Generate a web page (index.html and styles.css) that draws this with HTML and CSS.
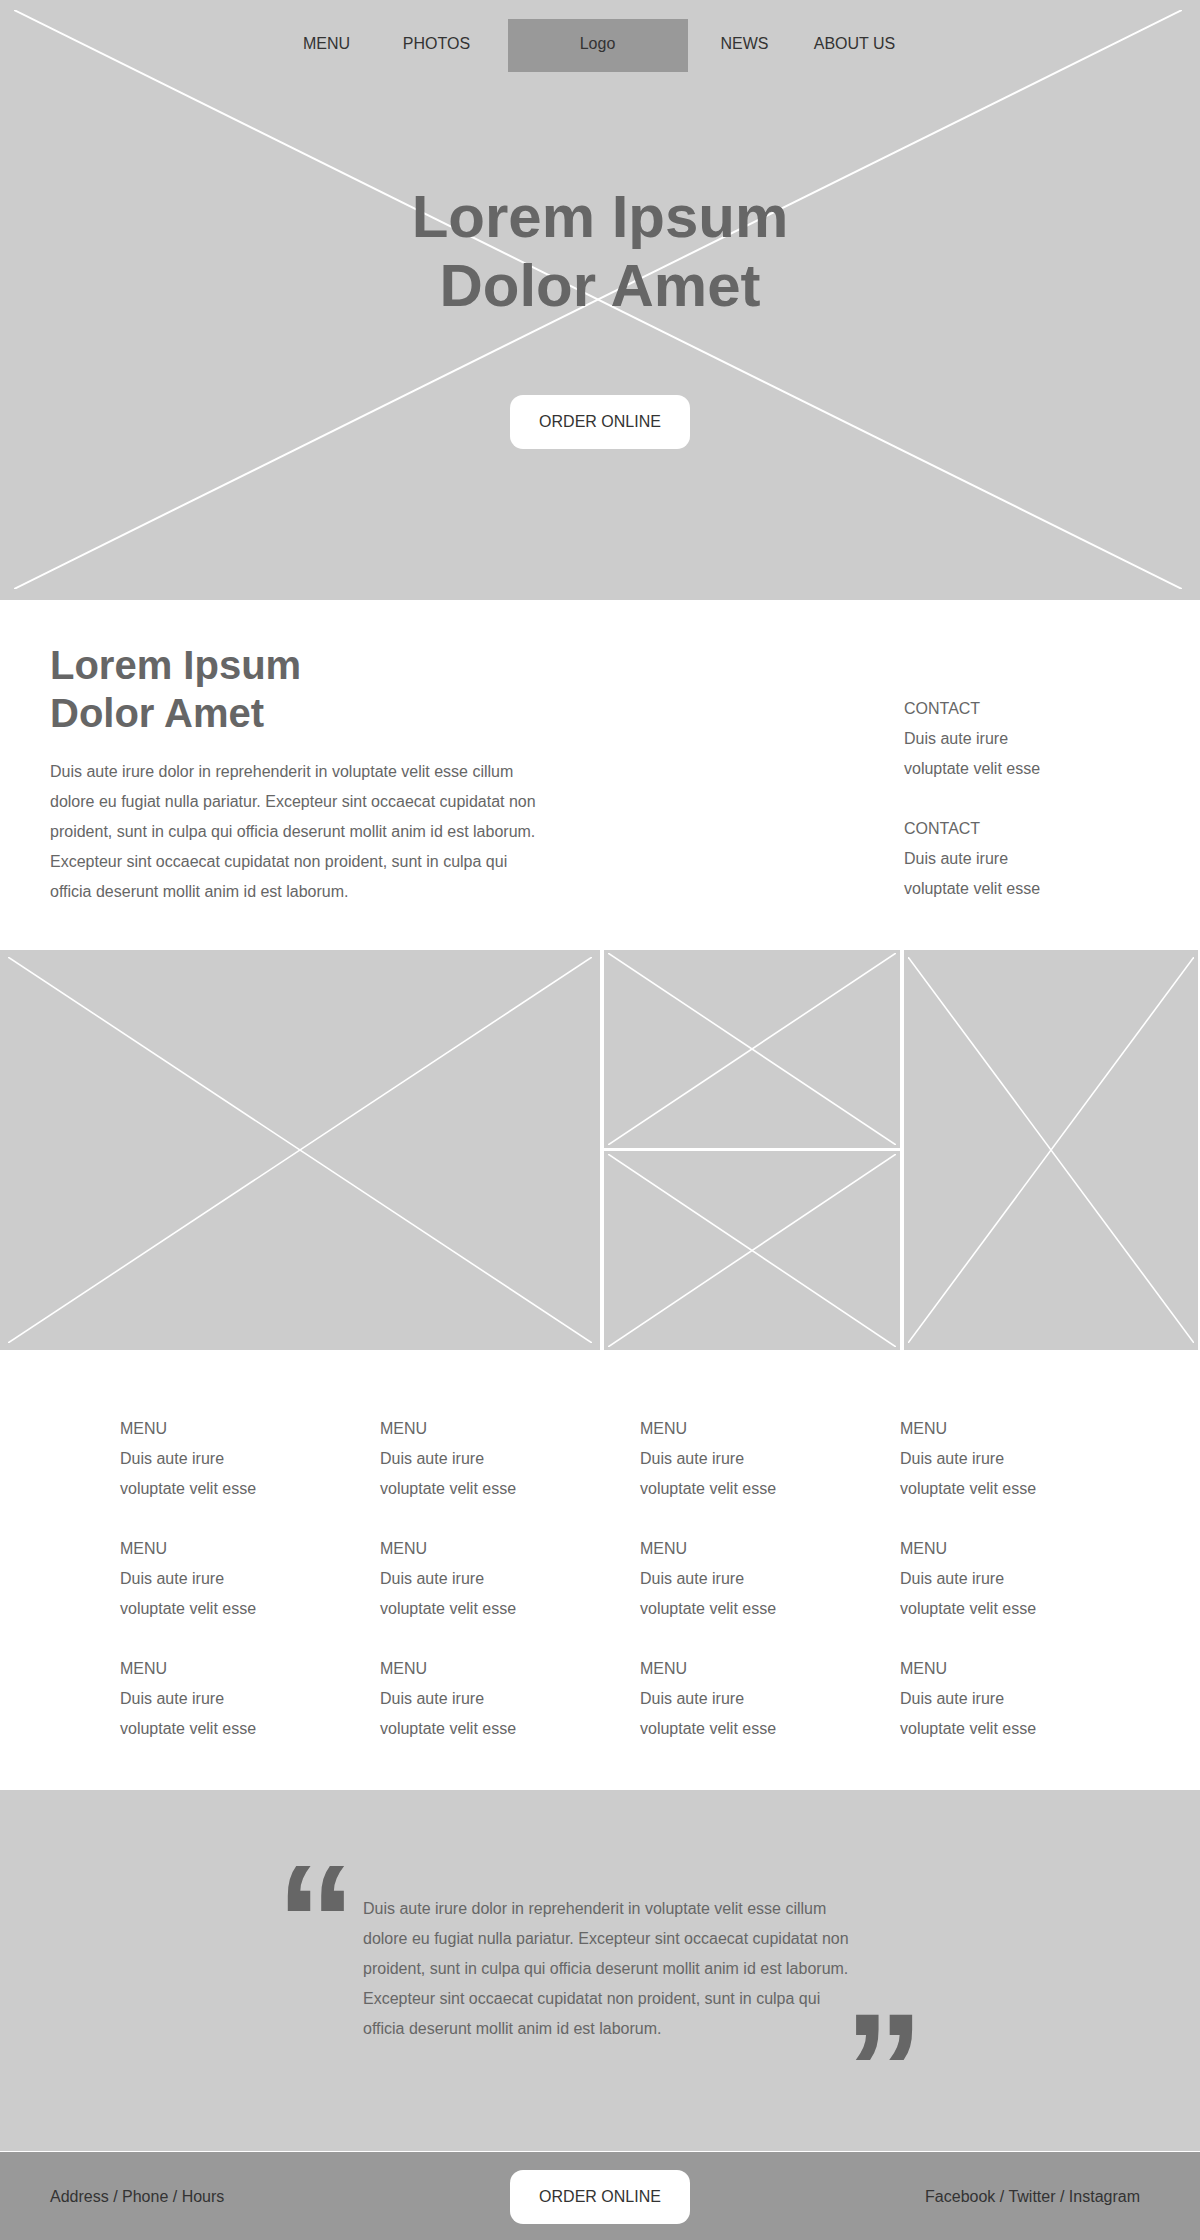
FILE: index.html
```html
<!DOCTYPE html>
<html lang="en">
<head>
<meta charset="utf-8">
<title>Lorem Ipsum</title>
<link rel="stylesheet" href="styles.css">
</head>
<body>
<header class="hero">
  <svg class="hero-x" viewBox="0 0 100 100" preserveAspectRatio="none" aria-hidden="true">
    <line x1="0" y1="0" x2="100" y2="100"/>
    <line x1="100" y1="0" x2="0" y2="100"/>
  </svg>
  <nav class="nav">
    <a class="nav-item">MENU</a>
    <a class="nav-item">PHOTOS</a>
    <div class="logo">Logo</div>
    <a class="nav-item">NEWS</a>
    <a class="nav-item">ABOUT US</a>
  </nav>
  <h1 class="hero-title">Lorem Ipsum<br>Dolor Amet</h1>
  <a class="btn">ORDER ONLINE</a>
</header>

<section class="about">
  <div class="about-main">
    <h2 class="about-title">Lorem Ipsum<br>Dolor Amet</h2>
    <p class="body-text">Duis aute irure dolor in reprehenderit in voluptate velit esse cillum dolore eu fugiat nulla pariatur. Excepteur sint occaecat cupidatat non proident, sunt in culpa qui officia deserunt mollit anim id est laborum. Excepteur sint occaecat cupidatat non proident, sunt in culpa qui officia deserunt mollit anim id est laborum.</p>
  </div>
  <div class="contact">
    <div class="info-block">
      <div>CONTACT</div>
      <div>Duis aute irure</div>
      <div>voluptate velit esse</div>
    </div>
    <div class="info-block">
      <div>CONTACT</div>
      <div>Duis aute irure</div>
      <div>voluptate velit esse</div>
    </div>
  </div>
</section>

<section class="gallery">
  <div class="ph ph-big"><svg viewBox="0 0 100 100" preserveAspectRatio="none"><line x1="0" y1="0" x2="100" y2="100"/><line x1="100" y1="0" x2="0" y2="100"/></svg></div>
  <div class="ph ph-small"><svg viewBox="0 0 100 100" preserveAspectRatio="none"><line x1="0" y1="0" x2="100" y2="100"/><line x1="100" y1="0" x2="0" y2="100"/></svg></div>
  <div class="ph ph-tall"><svg viewBox="0 0 100 100" preserveAspectRatio="none"><line x1="0" y1="0" x2="100" y2="100"/><line x1="100" y1="0" x2="0" y2="100"/></svg></div>
  <div class="ph ph-small"><svg viewBox="0 0 100 100" preserveAspectRatio="none"><line x1="0" y1="0" x2="100" y2="100"/><line x1="100" y1="0" x2="0" y2="100"/></svg></div>
</section>

<section class="menu-list">
  <div class="info-block"><div>MENU</div><div>Duis aute irure</div><div>voluptate velit esse</div></div>
  <div class="info-block"><div>MENU</div><div>Duis aute irure</div><div>voluptate velit esse</div></div>
  <div class="info-block"><div>MENU</div><div>Duis aute irure</div><div>voluptate velit esse</div></div>
  <div class="info-block"><div>MENU</div><div>Duis aute irure</div><div>voluptate velit esse</div></div>
  <div class="info-block"><div>MENU</div><div>Duis aute irure</div><div>voluptate velit esse</div></div>
  <div class="info-block"><div>MENU</div><div>Duis aute irure</div><div>voluptate velit esse</div></div>
  <div class="info-block"><div>MENU</div><div>Duis aute irure</div><div>voluptate velit esse</div></div>
  <div class="info-block"><div>MENU</div><div>Duis aute irure</div><div>voluptate velit esse</div></div>
  <div class="info-block"><div>MENU</div><div>Duis aute irure</div><div>voluptate velit esse</div></div>
  <div class="info-block"><div>MENU</div><div>Duis aute irure</div><div>voluptate velit esse</div></div>
  <div class="info-block"><div>MENU</div><div>Duis aute irure</div><div>voluptate velit esse</div></div>
  <div class="info-block"><div>MENU</div><div>Duis aute irure</div><div>voluptate velit esse</div></div>
</section>

<section class="testimonial">
  <span class="qmark qmark-open">&ldquo;</span>
  <p class="body-text quote-text">Duis aute irure dolor in reprehenderit in voluptate velit esse cillum dolore eu fugiat nulla pariatur. Excepteur sint occaecat cupidatat non proident, sunt in culpa qui officia deserunt mollit anim id est laborum. Excepteur sint occaecat cupidatat non proident, sunt in culpa qui officia deserunt mollit anim id est laborum.</p>
  <span class="qmark qmark-close">&rdquo;</span>
</section>

<footer class="footer">
  <div class="footer-left">Address / Phone / Hours</div>
  <a class="btn">ORDER ONLINE</a>
  <div class="footer-right">Facebook / Twitter / Instagram</div>
</footer>
</body>
</html>
```

FILE: styles.css
```css
* { box-sizing: border-box; }

body {
  margin: 0;
  font-family: "Liberation Sans", Arial, sans-serif;
  font-size: 16px;
  color: #666;
  background: #fff;
}

/* ---------- hero ---------- */
.hero {
  position: relative;
  height: 600px;
  background: #ccc;
  display: flex;
  flex-direction: column;
  align-items: center;
  padding-top: 19px;
}

.hero-x {
  position: absolute;
  left: 14px;
  right: 18px;
  top: 10px;
  bottom: 11px;
  width: calc(100% - 32px);
  height: calc(100% - 21px);
}
.hero-x line,
.ph line {
  stroke: #fff;
  stroke-width: 2;
  vector-effect: non-scaling-stroke;
}

.nav {
  position: relative;
  display: flex;
  align-items: center;
  height: 53px;
  padding-right: 19px;
}
.nav-item {
  width: 110px;
  text-align: center;
  color: #333;
  font-size: 16px;
  padding-bottom: 4px;
}
.logo {
  width: 180px;
  height: 53px;
  margin: 0 2px 0 16px;
  padding-bottom: 4px;
  background: #999;
  color: #333;
  display: flex;
  align-items: center;
  justify-content: center;
}

.hero-title {
  position: relative;
  margin: 110px 0 0;
  font-size: 60px;
  line-height: 69px;
  font-weight: bold;
  color: #666;
  text-align: center;
}

.btn {
  position: relative;
  width: 180px;
  height: 54px;
  border-radius: 13px;
  background: #fff;
  color: #333;
  display: flex;
  align-items: center;
  justify-content: center;
  font-size: 16px;
}
.hero .btn { margin-top: 75px; }

/* ---------- about ---------- */
.about {
  height: 350px;
  display: grid;
  grid-template-columns: 854px 1fr;
  padding: 41px 50px 0;
}
.about-title {
  margin: 0;
  font-size: 40px;
  line-height: 48px;
  font-weight: bold;
  color: #666;
}
.body-text {
  margin: 20px 0 0;
  width: 490px;
  line-height: 30px;
  color: #666;
}
.contact {
  margin-top: 53px;
  display: flex;
  flex-direction: column;
  gap: 30px;
}
.info-block {
  line-height: 30px;
  color: #666;
}

/* ---------- gallery ---------- */
.gallery {
  height: 400px;
  display: grid;
  grid-template-columns: 600px 296px 294px;
  grid-template-rows: 198px 199px;
  column-gap: 4px;
  row-gap: 3px;
}
.ph {
  background: #ccc;
  display: flex;
}
.ph svg {
  display: block;
  width: 100%;
  height: 100%;
}
.ph line { stroke-width: 1.6; }
.ph-big { grid-row: 1 / 3; padding: 7px 8px; }
.ph-tall { grid-row: 1 / 3; grid-column: 3; padding: 7px 4px; }
.ph-small { grid-column: 2; padding: 3px 4px; }

/* ---------- menu list ---------- */
.menu-list {
  height: 440px;
  display: grid;
  grid-template-columns: repeat(4, 260px);
  grid-auto-rows: 90px;
  row-gap: 30px;
  padding: 64px 0 0 120px;
}

/* ---------- testimonial ---------- */
.testimonial {
  height: 361px;
  background: #ccc;
  display: flex;
  align-items: flex-start;
  padding-left: 276px;
}
.qmark {
  display: block;
  font-size: 160px;
  line-height: 160px;
  font-weight: bold;
  color: #666;
}
.qmark-open {
  width: 87px;
  margin-top: 51px;
}
.quote-text {
  margin: 104px 0 0;
}
.qmark-close {
  margin: 200px 0 0 -9px;
}

/* ---------- footer ---------- */
.footer {
  height: 89px;
  background: #999;
  border-top: 1px solid #fff;
  display: grid;
  grid-template-columns: 1fr 180px 1fr;
  align-items: center;
  padding: 2px 50px 0;
  color: #333;
}
.footer-right {
  justify-self: end;
  margin-right: 10px;
}
```
